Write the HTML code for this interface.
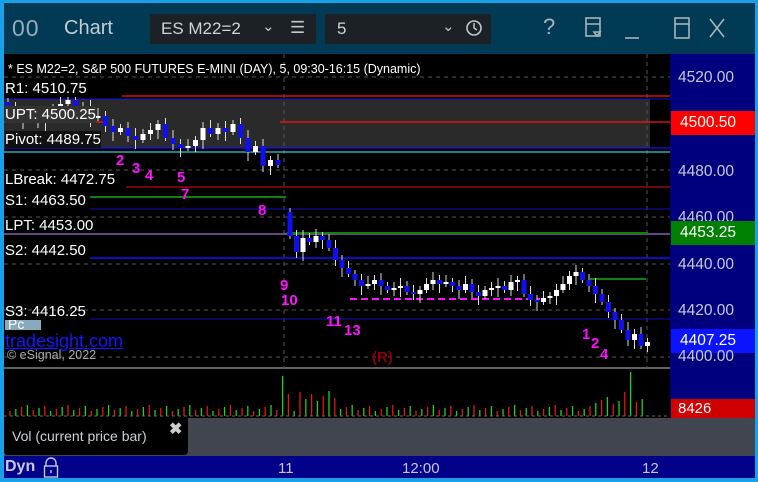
<!DOCTYPE html><html><head><meta charset="utf-8"><style>
*{margin:0;padding:0;box-sizing:border-box}
body{width:758px;height:482px;background:#1aa0e6;position:relative;overflow:hidden;font-family:"Liberation Sans",Arial,sans-serif}
.a{position:absolute;white-space:nowrap}
.lbl{position:absolute;color:#fff;font-size:15px;left:5px;line-height:17px}
.px{position:absolute;left:678px;color:#c8c8dc;font-size:15.5px}
.m{position:absolute;color:#ff10ff;font-weight:bold;font-size:15px}
</style></head><body>
<div class="a" style="left:4px;top:3px;width:751px;height:51px;background:#003a55"></div>
<div class="a" style="left:12px;top:15px;color:#9ab;font-size:23px;letter-spacing:1px">00</div>
<div class="a" style="left:64px;top:17px;color:#c4ccd4;font-size:20px">Chart</div>
<div class="a" style="left:150px;top:14px;width:166px;height:30px;background:#1c2125"></div>
<div class="a" style="left:161px;top:19px;color:#d0d4d8;font-size:17px">ES M22=2</div>
<div class="a" style="left:262px;top:17px;color:#c0c8cc;font-size:15px">&#8964;</div>
<div class="a" style="left:290px;top:18px;color:#c0c8cc;font-size:17px">&#9776;</div>
<div class="a" style="left:325px;top:14px;width:166px;height:30px;background:#1c2125"></div>
<div class="a" style="left:337px;top:19px;color:#d0d4d8;font-size:17px">5</div>
<div class="a" style="left:442px;top:17px;color:#c0c8cc;font-size:15px">&#8964;</div>
<svg class="a" style="left:465px;top:19px" width="20" height="20"><circle cx="9" cy="9" r="7" fill="none" stroke="#c0c8cc" stroke-width="1.6"/><path d="M9 4v5l3 2" stroke="#c0c8cc" stroke-width="1.5" fill="none"/></svg>
<div class="a" style="left:543px;top:14px;color:#a9b3bb;font-size:22px">?</div>
<svg class="a" style="left:585px;top:16px" width="140" height="26" fill="none" stroke="#a9b3bb" stroke-width="1.6"><rect x="1" y="2" width="14" height="18"/><path d="M1 8h14M9 16h6l-3 4z"/><path d="M40 22h14"/><rect x="90" y="2" width="14" height="20"/><path d="M90 8h14"/><path d="M125 3l14 18M139 3l-14 18"/></svg>
<div class="a" style="left:4px;top:54px;width:751px;height:364px;background:#000"></div>
<div class="a" style="left:670px;top:54px;width:85px;height:364px;background:#00007e"></div>
<div class="a" style="left:4px;top:367px;width:666px;height:2px;background:#606060"></div>
<svg class="a" style="left:4px;top:54px" width="666" height="314" id="ch">
<rect x="0" y="45" width="646" height="49" fill="#2a2a2a"/>
<g stroke="#555" stroke-dasharray="4,4" stroke-width="1"><path d="M0 23h666M0 116h666M0 163h666M0 210h666M0 256h666M0 303h666M280 0v314M643 0v314"/></g>
<path d="M118 42h548" stroke="#ff1010" stroke-width="1.3"/>
<path d="M0 45h666" stroke="#1010e0"/>
<path d="M0 68h100M276 68h390" stroke="#ff1010" stroke-width="1.3"/>
<path d="M0 94h666" stroke="#1010ff" stroke-width="1.3"/>
<path d="M0 98h666" stroke="#40ffff"/>
<path d="M122 133h544" stroke="#e01010"/>
<path d="M86 143h196" stroke="#108010" stroke-width="2"/>
<path d="M86 155h580" stroke="#1010c0"/>
<path d="M0 180h666" stroke="#a070d0" stroke-width="1.3"/>
<path d="M283 179h361" stroke="#108010" stroke-width="2"/>
<path d="M86 204h580" stroke="#1010ff" stroke-width="1.5"/>
<path d="M86 265h580" stroke="#1010c0"/>
<path d="M346 245h190" stroke="#ff10ff" stroke-width="2" stroke-dasharray="7,4"/>
<path d="M586 225h56" stroke="#108010" stroke-width="2"/>
<g id="cd"></g>
</svg>
<div class="a" style="left:8px;top:62px;color:#fff;font-size:12.5px">* ES M22=2, S&amp;P 500 FUTURES E-MINI (DAY), 5, 09:30-16:15 (Dynamic)</div>
<div class="lbl" style="top:80px;background:#000">R1: 4510.75</div>
<div class="lbl" style="top:106px;background:#333">UPT: 4500.25</div>
<div class="lbl" style="top:131px;background:#111">Pivot: 4489.75</div>
<div class="lbl" style="top:171px">LBreak: 4472.75</div>
<div class="lbl" style="top:192px">S1: 4463.50</div>
<div class="lbl" style="top:217px">LPT: 4453.00</div>
<div class="lbl" style="top:242px">S2: 4442.50</div>
<div class="lbl" style="top:303px">S3: 4416.25</div>
<div class="a" style="left:5px;top:320px;width:36px;height:10px;background:#8ab;overflow:hidden;color:#fff;font-size:14px;line-height:8px;padding-left:3px">Pc</div>
<div class="a" style="left:5px;top:331px;color:#1515ff;font-size:18px;text-decoration:underline">tradesight.com</div>
<div class="a" style="left:7px;top:348px;color:#aaa;font-size:12.5px">© eSignal, 2022</div>
<div class="a" style="left:372px;top:349px;color:#800;font-size:15px;font-weight:bold">(R)</div>
<div class="m" style="left:116px;top:152px">2</div><div class="m" style="left:132px;top:160px">3</div><div class="m" style="left:145px;top:167px">4</div><div class="m" style="left:177px;top:169px">5</div><div class="m" style="left:181px;top:186px">7</div><div class="m" style="left:258px;top:202px">8</div><div class="m" style="left:280px;top:277px">9</div><div class="m" style="left:281px;top:292px">10</div><div class="m" style="left:326px;top:313px">11</div><div class="m" style="left:344px;top:322px">13</div><div class="m" style="left:582px;top:326px">1</div><div class="m" style="left:591px;top:335px">2</div><div class="m" style="left:600px;top:346px">4</div>
<div class="px" style="top:69px">4520.00</div>
<div class="a" style="left:671px;top:111px;width:84px;height:24px;background:#ff0000"></div><div class="px" style="top:114px;color:#fff;left:680px">4500.50</div>
<div class="px" style="top:163px">4480.00</div>
<div class="px" style="top:209px">4460.00</div>
<div class="a" style="left:671px;top:221px;width:84px;height:24px;background:#008000"></div><div class="px" style="top:224px;color:#fff;left:680px">4453.25</div>
<div class="px" style="top:256px">4440.00</div>
<div class="px" style="top:302px">4420.00</div>
<div class="a" style="left:671px;top:329px;width:84px;height:24px;background:#0a14ff"></div><div class="px" style="top:332px;color:#fff;left:680px">4407.25</div>
<div class="px" style="top:348px;height:18px;overflow:hidden">4400.00</div>
<div class="a" style="left:671px;top:399px;width:84px;height:19px;background:#d00000"></div><div class="a" style="left:678px;top:400px;color:#fff;font-size:15px">8426</div>
<svg class="a" style="left:4px;top:369px;background:#000" width="666" height="49" id="vol"></svg>
<div class="a" style="left:4px;top:418px;width:751px;height:38px;background:#41454f"></div>
<div class="a" style="left:4px;top:418px;width:184px;height:37px;background:#000;border-radius:0 0 4px 4px"></div>
<div class="a" style="left:12px;top:428px;color:#c8d0dc;font-size:14px">Vol (current price bar)</div>
<div class="a" style="left:169px;top:419px;color:#ccc;font-size:16px;font-weight:bold">✖</div>
<div class="a" style="left:4px;top:456px;width:751px;height:22px;background:#00008a"></div>
<div class="a" style="left:5px;top:458px;color:#c8c8dc;font-size:16px;font-weight:bold">Dyn</div>
<svg class="a" style="left:43px;top:457px" width="16" height="22" fill="none" stroke="#c8c8dc" stroke-width="1.4"><path d="M3 9V6a5 5 0 0 1 10 0v3"/><rect x="1.5" y="9" width="13" height="11"/><path d="M8 13v3"/></svg>
<div class="a" style="left:278px;top:460px;color:#c8c8dc;font-size:15px">11</div>
<div class="a" style="left:402px;top:460px;color:#c8c8dc;font-size:15px">12:00</div>
<div class="a" style="left:642px;top:460px;color:#c8c8dc;font-size:15px">12</div>
<script>
var ns="http://www.w3.org/2000/svg",g=document.getElementById("cd"),v=document.getElementById("vol");
function add(p,t,a){var e=document.createElementNS(ns,t);for(var k in a)e.setAttribute(k,a[k]);p.appendChild(e);}
function seg(x0,st,prev,cs){for(var i=0;i<cs.length;i++){var x=x0+st*i,c=cs[i],lo=Math.min(prev,c),hi=Math.max(prev,c),h=Math.max(2,hi-lo);var w=(i*7)%5;add(g,"line",{x1:x,x2:x,y1:lo-4-w,y2:hi+3+(i%3)*3,stroke:"#ddd","stroke-width":1});add(g,"rect",{x:x-2.5,y:lo,width:5,height:h,fill:c>prev?"#1010ee":"#fff"});prev=c;}}
seg(4,7.5,48,[54,62,66,60,68,62,56,50,46,58,52,64,62,72,78,74,82,86,80,76,70,84,90,94,92,86,74,80,74,78,70,84,98,92,112,106,111]);
seg(286,6.5,158,[182,198,184,188,182,186,194,206,214,220,226,232,230,226,232,236,234,232,238,240,236,230,226,230,228,232,236,230,238,242,236,234,232,236,228,226,240,246,248,244,242,236,230,222,218,226,232,240,248,258,266,276,286,280,292,288]);
for(var i=0;i<110;i++){var x=6+i*5.8,h=5+((i*37)%7);if(i==47)h=40;else if(i==48)h=22;else if(i>=50&&i<=56)h=14+((i*5)%12);else if(i==107)h=44;else if(i==106)h=24;else if(i>=100)h=10+((i*3)%10);add(v,"line",{x1:x,x2:x,y1:47-h,y2:47,stroke:i%2?"#20d020":"#e01818","stroke-width":1.3});}
add(v,"path",{d:"M0 47h666",stroke:"#666","stroke-dasharray":"3,3"});
</script>
</body></html>
